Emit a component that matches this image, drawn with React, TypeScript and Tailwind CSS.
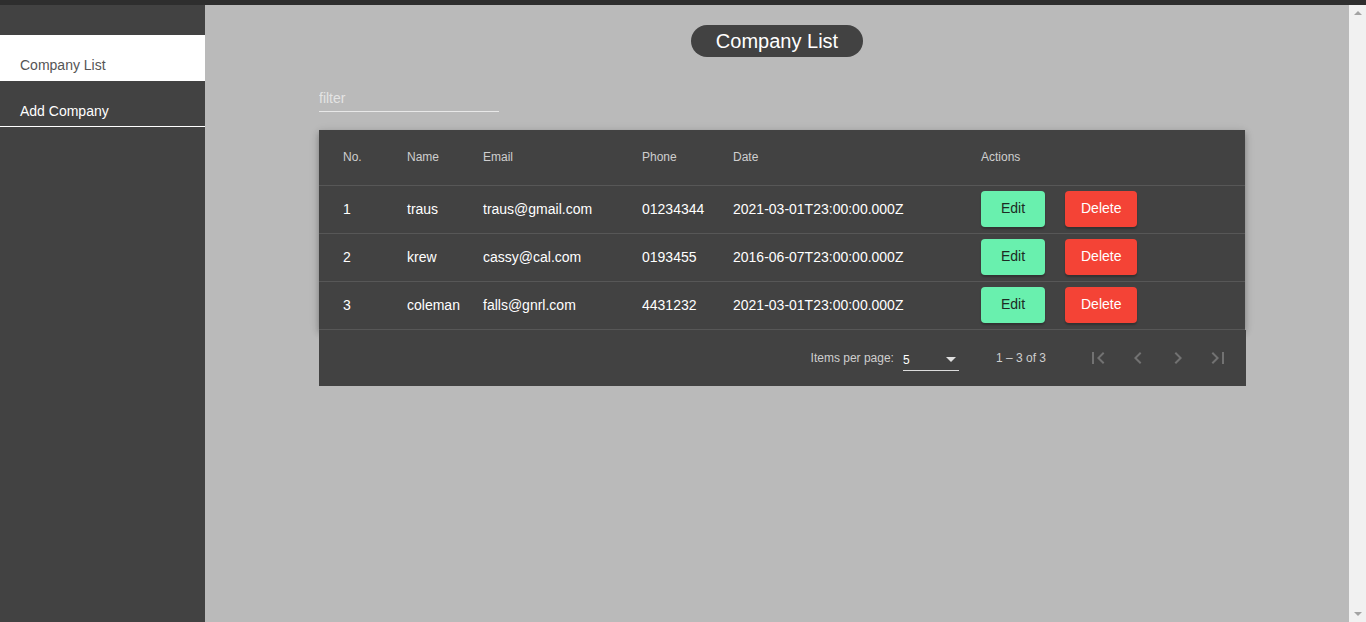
import React, { useState } from 'react';

type Company = {
  id: number;
  name: string;
  email: string;
  phone: string;
  date: string;
};

const companies: Company[] = [
  { id: 1, name: 'traus', email: 'traus@gmail.com', phone: '01234344', date: '2021-03-01T23:00:00.000Z' },
  { id: 2, name: 'krew', email: 'cassy@cal.com', phone: '0193455', date: '2016-06-07T23:00:00.000Z' },
  { id: 3, name: 'coleman', email: 'falls@gnrl.com', phone: '4431232', date: '2021-03-01T23:00:00.000Z' },
];

const cols = 'grid grid-cols-[64px_76px_159px_91px_248px_1fr] items-center';

function PagerIcon({ d }: { d: string }) {
  return (
    <button className="w-10 h-10 flex items-center justify-center text-[#727272] cursor-default">
      <svg width="24" height="24" viewBox="0 0 24 24" fill="currentColor">
        <path d={d} />
      </svg>
    </button>
  );
}

export default function App() {
  const [filter, setFilter] = useState('');

  const rows = companies.filter(c =>
    `${c.name} ${c.email} ${c.phone}`.toLowerCase().includes(filter.toLowerCase())
  );

  return (
    <div className="h-[622px] flex flex-col overflow-hidden font-['Liberation_Sans',Arial,sans-serif]">
      <div className="h-[5px] bg-[#2e2e2e] shrink-0" />
      <div className="flex flex-1 min-h-0">
        <aside className="w-[205px] shrink-0 bg-[#424242] pt-[30px]">
          <a href="#" className="block h-[46px] bg-white pl-5 pt-[22px] text-[14px] leading-[16px] text-[#555]">
            Company List
          </a>
          <a href="#" className="block h-[46px] border-b border-white pl-5 pt-[22px] text-[14px] leading-[16px] text-white">
            Add Company
          </a>
        </aside>

        <main className="flex-1 bg-[#bababa] flex flex-col">
          <div className="flex justify-center mt-5">
            <h1 className="h-8 px-[25px] rounded-full bg-[#424242] text-white text-[20px] leading-8">
              Company List
            </h1>
          </div>

          <div className="ml-[114px] w-[926px]">
            <input
              value={filter}
              onChange={e => setFilter(e.target.value)}
              placeholder="filter"
              className="mt-[30px] block w-[180px] h-[25px] pb-[2px] bg-transparent border-b border-[#e8e8e8] text-[14px] text-white placeholder:text-[#e4e4e4] outline-none"
            />

            <div className="mt-[18px] bg-[#424242] shadow-[0_3px_6px_rgba(0,0,0,0.25),0_2px_10px_rgba(0,0,0,0.12)]">
              <div className={`${cols} h-[56px] border-b border-[#575757] pl-6 pb-[2px] text-[12px] font-medium text-[#cfcfcf]`}>
                <span>No.</span>
                <span>Name</span>
                <span>Email</span>
                <span>Phone</span>
                <span>Date</span>
                <span>Actions</span>
              </div>
              {rows.map(c => (
                <div key={c.id} className={`${cols} h-[48px] border-b border-[#575757] pl-6 text-[14px] text-white`}>
                  <span>{c.id}</span>
                  <span>{c.name}</span>
                  <span>{c.email}</span>
                  <span>{c.phone}</span>
                  <span>{c.date}</span>
                  <span className="flex gap-5 pb-[2px]">
                    <button className="h-9 min-w-16 px-4 rounded bg-[#69f0ae] text-[14px] text-[#1d2b24] shadow-[0_2px_2px_rgba(0,0,0,0.25)]">
                      Edit
                    </button>
                    <button className="h-9 min-w-16 px-4 rounded bg-[#f44336] text-[14px] text-white shadow-[0_2px_2px_rgba(0,0,0,0.25)]">
                      Delete
                    </button>
                  </span>
                </div>
              ))}
            </div>

            <div className="w-[927px] h-[56px] bg-[#424242] flex items-center justify-end pr-2 text-[12px] text-[#cfcfcf]">
              <span>Items per page:</span>
              <div className="ml-[9px] w-14 h-[26px] border-b border-[#dcdcdc] flex items-center justify-between pt-1 pr-[3px]">
                <span className="text-white">5</span>
                <span className="w-0 h-0 border-x-[5px] border-x-transparent border-t-[5px] border-t-[#e0e0e0]" />
              </div>
              <span className="ml-[37px] mr-8">1 – 3 of 3</span>
              <PagerIcon d="M18.41 16.59L13.82 12l4.59-4.59L17 6l-6 6 6 6zM6 6h2v12H6z" />
              <PagerIcon d="M15.41 7.41L14 6l-6 6 6 6 1.41-1.41L10.83 12z" />
              <PagerIcon d="M10 6L8.59 7.41 13.17 12l-4.58 4.59L10 18l6-6z" />
              <PagerIcon d="M5.59 7.41L10.18 12l-4.59 4.59L7 18l6-6-6-6zM16 6h2v12h-2z" />
            </div>
          </div>
        </main>

        <div className="w-[17px] shrink-0 bg-[#f1f1f1] flex flex-col items-center justify-between py-[6px]">
          <span className="w-0 h-0 border-x-[4px] border-x-transparent border-b-[4px] border-b-[#a3a3a3]" />
          <span className="w-0 h-0 border-x-[4px] border-x-transparent border-t-[4px] border-t-[#a3a3a3]" />
        </div>
      </div>
    </div>
  );
}
